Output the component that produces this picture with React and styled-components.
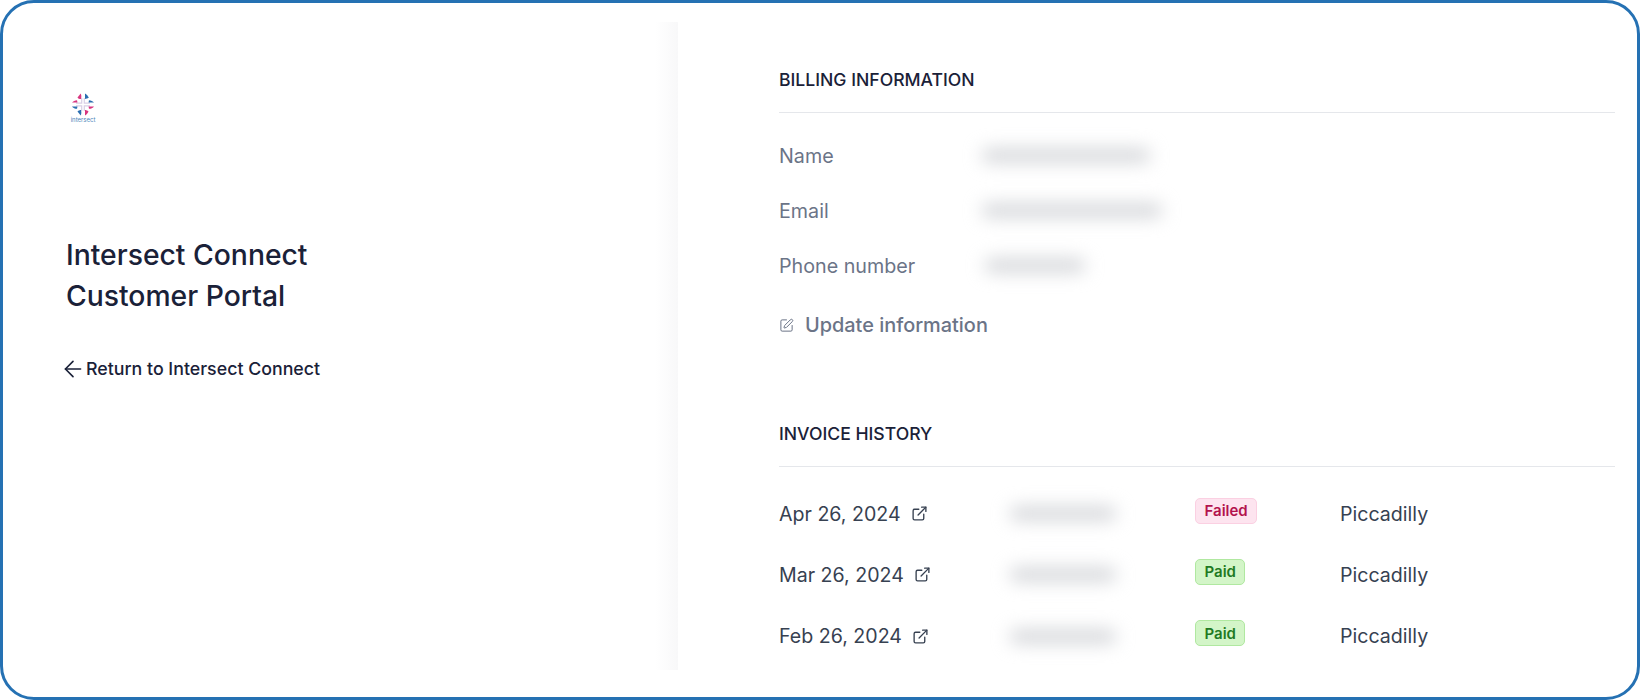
import React from "react";
import styled, { createGlobalStyle } from "styled-components";
import { ArrowLeft, ExternalLink, SquarePen } from "lucide-react";

const GlobalStyle = createGlobalStyle`
  html, body {
    margin: 0;
    background: #fff;
    font-family: Inter, "Liberation Sans", sans-serif;
  }
`;

const invoices = [
  { date: "Apr 26, 2024", status: "Failed" },
  { date: "Mar 26, 2024", status: "Paid" },
  { date: "Feb 26, 2024", status: "Paid" },
];

const Logo = () => (
  <LogoWrap>
    <svg width="24" height="23" viewBox="0 0 24 23" fill="none">
      <path d="M10.7 5v5.2H5M13.3 5v5.2H19M10.7 18v-5.2H5M13.3 18v-5.2H19" stroke="#d9cfe6" strokeWidth="1.2" />
      <path d="M9.7 0.5 C10.5 2 10.5 4 10 6 C8.5 6 7 5.5 6.5 4.5 Z" fill="#d8357f" />
      <path d="M14 0.5 C15.5 1.5 17 3 17.8 4.8 C16.5 5.5 15 6 14 6 Z" fill="#2a6eb0" />
      <path d="M1 9.6 C2 8 4 7.4 6 7.2 L6.5 9.6 Z" fill="#d8357f" />
      <path d="M23 9.6 C22 8.4 20 7.4 18 7.2 L17.5 9.6 Z" fill="#2a6eb0" />
      <path d="M1 13.4 L6.5 13.4 L6 15.8 C4 15.6 2 15 1 13.4 Z" fill="#2a6eb0" />
      <path d="M23 13.4 L17.5 13.4 L18 15.8 C20 15.6 22 15 23 13.4 Z" fill="#d8357f" />
      <path d="M6.5 18.5 C7.5 17.5 8.8 17 10 17 C10.5 19 10.5 21 9.7 22.5 Z" fill="#2a6eb0" />
      <path d="M14 17 C15 17 16.5 17.5 17.5 18.5 C17 20 15.5 21.5 14 22.5 Z" fill="#d8357f" />
    </svg>
    <LogoText>intersect</LogoText>
  </LogoWrap>
);

const App = () => {
  return (
    <Frame>
      <GlobalStyle />
      <Sidebar>
        <Logo />
        <Title>
          Intersect Connect
          <br />
          Customer Portal
        </Title>
        <BackLink>
          <ArrowLeft size={26} strokeWidth={1.5} />
          Return to Intersect Connect
        </BackLink>
      </Sidebar>
      <Shade />
      <Content>
        <SectionTitle>BILLING INFORMATION</SectionTitle>
        <InfoList>
          <InfoRow>
            <Label>Name</Label>
            <Blur $w={168} />
          </InfoRow>
          <InfoRow>
            <Label>Email</Label>
            <Blur $w={180} />
          </InfoRow>
          <InfoRow>
            <Label>Phone number</Label>
            <Blur $w={100} $x={3} />
          </InfoRow>
        </InfoList>
        <UpdateLink>
          <SquarePen size={15} strokeWidth={1.6} />
          Update information
        </UpdateLink>
        <SectionTitle>INVOICE HISTORY</SectionTitle>
        <Invoices>
          {invoices.map((invoice) => (
            <InvoiceRow key={invoice.date}>
              <DateCell>
                {invoice.date}
                <ExternalLink size={17} strokeWidth={1.9} />
              </DateCell>
              <Blur $w={106} />
              <Badge $failed={invoice.status === "Failed"}>{invoice.status}</Badge>
              <span>Piccadilly</span>
            </InvoiceRow>
          ))}
        </Invoices>
      </Content>
    </Frame>
  );
};

export default App;

const Frame = styled.div`
  box-sizing: border-box;
  width: 1640px;
  height: 700px;
  padding: 19px 0 27px;
  display: flex;
  background: #fff;
  border: 3px solid #2571b3;
  border-radius: 34px;
  overflow: hidden;
`;
const Sidebar = styled.div`
  width: 652px;
  flex-shrink: 0;
  box-sizing: border-box;
  padding: 71px 0 0 63px;
  color: #1a2138;
`;
const LogoWrap = styled.div`
  width: 30px;
  margin-left: 2px;
  display: flex;
  flex-direction: column;
  align-items: center;
  svg {
    display: block;
  }
`;
const LogoText = styled.div`
  font-size: 6px;
  line-height: 7px;
  color: #4d86bb;
`;
const Title = styled.h1`
  margin: 112px 0 0;
  font-size: 28.3px;
  line-height: 41px;
  font-weight: 500;
`;
const BackLink = styled.div`
  height: 24px;
  margin: 40px 0 0 -6px;
  display: flex;
  align-items: center;
  font-size: 17.8px;
  line-height: 24px;
  font-weight: 500;
  svg {
    flex-shrink: 0;
  }
`;
const Shade = styled.div`
  width: 23px;
  flex-shrink: 0;
  background: linear-gradient(to right, #ffffff, #f8f8f9);
`;
const Content = styled.div`
  flex: 1;
  min-width: 0;
  padding: 46px 22px 0 101px;
  overflow: hidden;
`;
const SectionTitle = styled.h2`
  margin: 0;
  padding-bottom: 20px;
  font-size: 17.6px;
  line-height: 24px;
  font-weight: 500;
  color: #1a2138;
  border-bottom: 1px solid #e5e7eb;
`;
const InfoList = styled.div`
  margin-top: 15px;
`;
const InfoRow = styled.div`
  height: 55px;
  display: grid;
  grid-template-columns: 203px 1fr;
  align-items: center;
`;
const Label = styled.span`
  font-size: 19.7px;
  color: #6b7487;
`;
const Blur = styled.div`
  width: ${(p) => p.$w}px;
  height: 13px;
  margin-left: ${(p) => p.$x || 0}px;
  background: #d0d2d6;
  border-radius: 6px;
  filter: blur(9px);
`;
const UpdateLink = styled.div`
  margin: 18px 0 83px;
  height: 28px;
  display: flex;
  align-items: center;
  gap: 11px;
  font-size: 19.9px;
  font-weight: 500;
  color: #6b7487;
`;
const Invoices = styled.div`
  padding-top: 16px;
`;
const InvoiceRow = styled.div`
  height: 61.3px;
  display: grid;
  grid-template-columns: 231px 185px 145px 1fr;
  align-items: center;
  font-size: 19.6px;
  color: #374151;
`;
const DateCell = styled.div`
  display: flex;
  align-items: center;
  gap: 10px;
`;
const Badge = styled.span`
  justify-self: start;
  box-sizing: border-box;
  height: 26px;
  margin-top: -6px;
  padding: 0 8.5px;
  display: flex;
  align-items: center;
  font-size: 15px;
  font-weight: 600;
  border-radius: 5px;
  color: ${(p) => (p.$failed ? "#b3134d" : "#1f7a23")};
  background: ${(p) => (p.$failed ? "#fde4ef" : "#d3f5c8")};
  border: 1px solid ${(p) => (p.$failed ? "#fbd0e2" : "#b0e8a0")};
`;
